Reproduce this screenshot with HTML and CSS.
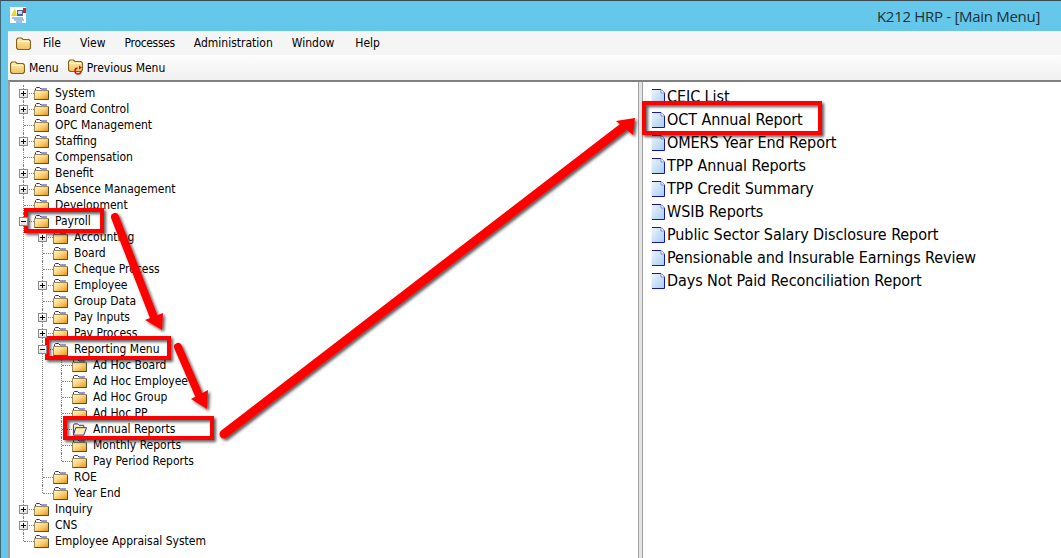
FILE: index.html
```html
<!DOCTYPE html>
<html lang="en">
<head>
    <meta charset="UTF-8">
    <title>K212 HRP - [Main Menu]</title>
    <link rel="stylesheet" href="styles.css">
</head>
<body>
  <svg class="defs" width="0" height="0">
      <defs>
          <linearGradient id="gold" x1="0" y1="0" x2="1" y2="1">
              <stop offset="0" stop-color="#fff4cc"/>
              <stop offset="0.45" stop-color="#fdd77e"/>
              <stop offset="1" stop-color="#e8900f"/>
          </linearGradient>
          <linearGradient id="menugold" x1="0" y1="0" x2="0" y2="1">
              <stop offset="0" stop-color="#fff0b8"/>
              <stop offset="1" stop-color="#f0c160"/>
          </linearGradient>
          <linearGradient id="paper" x1="0" y1="0" x2="1" y2="1">
              <stop offset="0" stop-color="#eef4fb"/>
              <stop offset="1" stop-color="#a6cdf2"/>
          </linearGradient>
          <symbol id="folder" viewBox="0 0 15 13">
              <path d="M1.5 3.5V1.5L2.5.5H5.5L7 2H13" fill="none" stroke="#2a2ab0"/>
              <path d="M.5 3.5H14.5V12.5H.5Z" fill="url(#gold)" stroke="#9a8a60"/>
              <path d="M.5 12.5H14.5V4" fill="none" stroke="#5f4f28"/>
          </symbol>
          <symbol id="folderopen" viewBox="0 0 16 13">
              <path d="M1.5 11V2L2.5.5H6L7.5 2H12.5V4" fill="#fff0b8" stroke="#2020b0"/>
              <path d="M1.5 12.5L4 4.5H15.5L12.5 12.5Z" fill="#ffeda6" stroke="#2020b0"/>
          </symbol>
          <symbol id="menufolder" viewBox="0 0 15 13">
              <path d="M.5 11V2.5L2 1H5.5L7 2.5H13L14.5 4V11L13 12.5H2Z" fill="url(#menugold)" stroke="#85621a" stroke-width="1.2"/>
              <path d="M1.5 4.5H13.5" stroke="#fff8dc" fill="none"/>
          </symbol>
          <symbol id="doc" viewBox="0 0 14 16">
              <path d="M.5 1H10L13 4.5V15.5H.5Z" fill="url(#paper)"/>
              <path d="M1 .5H10L13.5 4V15.5H1" fill="none" stroke="#1414b4"/>
              <path d="M10 .5V4H13.5" fill="#fff" stroke="#7a8ad0"/>
          </symbol>
      </defs>
  </svg>

  <div class="window">
      <header class="titlebar">
          <svg class="app-icon" width="16" height="16" viewBox="0 0 16 16">
              <rect width="16" height="16" fill="#fff"/>
              <path d="M1 9L5 1L7 9Z" fill="#e8d820"/>
              <rect x="7" y="3" width="6" height="6" fill="#4a6a9a"/>
              <rect x="8" y="4" width="4" height="3" fill="#c8d8e8"/>
              <rect x="13" y="1" width="3" height="5" fill="#e02020"/>
              <path d="M2 11H13M4 13H14M6 15H12" stroke="#3a80d0"/>
          </svg>
          <span class="title">K212 HRP - [Main Menu]</span>
      </header>

      <div class="client">
          <nav class="menubar">
              <svg class="menu-icon" width="15" height="13"><use href="#menufolder"/></svg>
              <span>File</span>
              <span>View</span>
              <span class="narrow">Processes</span>
              <span>Administration</span>
              <span>Window</span>
              <span class="help">Help</span>
          </nav>
          <div class="toolbar">
              <div class="tool">
                  <svg width="15" height="13"><use href="#menufolder"/></svg>
                  <span>Menu</span>
              </div>
              <div class="tool">
                  <svg width="15" height="17" viewBox="0 0 15 17">
                      <use href="#menufolder" width="15" height="13"/>
                      <path d="M9.5 9A3 3 0 1 0 13 12" fill="none" stroke="#e01010" stroke-width="1.5"/>
                      <path d="M11 6.5L14 8.5L11 10.5Z" fill="#e01010"/>
                  </svg>
                  <span>Previous Menu</span>
              </div>
          </div>

          <main class="panes">
              <section class="tree-pane">
                  <ul class="tree">
                      <li><div class="node"><i class="box"></i><svg width="15" height="13"><use href="#folder"/></svg><span>System</span></div></li>
                      <li><div class="node"><i class="box"></i><svg width="15" height="13"><use href="#folder"/></svg><span>Board Control</span></div></li>
                      <li><div class="node"><svg width="15" height="13"><use href="#folder"/></svg><span>OPC Management</span></div></li>
                      <li><div class="node"><i class="box"></i><svg width="15" height="13"><use href="#folder"/></svg><span>Staffing</span></div></li>
                      <li><div class="node"><svg width="15" height="13"><use href="#folder"/></svg><span>Compensation</span></div></li>
                      <li><div class="node"><i class="box"></i><svg width="15" height="13"><use href="#folder"/></svg><span>Benefit</span></div></li>
                      <li><div class="node"><i class="box"></i><svg width="15" height="13"><use href="#folder"/></svg><span>Absence Management</span></div></li>
                      <li><div class="node"><svg width="15" height="13"><use href="#folder"/></svg><span>Development</span></div></li>
                      <li>
                          <div class="node"><i class="box open"></i><svg width="15" height="13"><use href="#folder"/></svg><span>Payroll</span></div>
                          <ul>
                              <li><div class="node"><i class="box"></i><svg width="15" height="13"><use href="#folder"/></svg><span>Accounting</span></div></li>
                              <li><div class="node"><svg width="15" height="13"><use href="#folder"/></svg><span>Board</span></div></li>
                              <li><div class="node"><svg width="15" height="13"><use href="#folder"/></svg><span>Cheque Process</span></div></li>
                              <li><div class="node"><i class="box"></i><svg width="15" height="13"><use href="#folder"/></svg><span>Employee</span></div></li>
                              <li><div class="node"><svg width="15" height="13"><use href="#folder"/></svg><span>Group Data</span></div></li>
                              <li><div class="node"><i class="box"></i><svg width="15" height="13"><use href="#folder"/></svg><span>Pay Inputs</span></div></li>
                              <li><div class="node"><i class="box"></i><svg width="15" height="13"><use href="#folder"/></svg><span>Pay Process</span></div></li>
                              <li>
                                  <div class="node"><i class="box open"></i><svg width="15" height="13"><use href="#folder"/></svg><span>Reporting Menu</span></div>
                                  <ul>
                                      <li><div class="node"><svg width="15" height="13"><use href="#folder"/></svg><span>Ad Hoc Board</span></div></li>
                                      <li><div class="node"><svg width="15" height="13"><use href="#folder"/></svg><span>Ad Hoc Employee</span></div></li>
                                      <li><div class="node"><svg width="15" height="13"><use href="#folder"/></svg><span>Ad Hoc Group</span></div></li>
                                      <li><div class="node"><svg width="15" height="13"><use href="#folder"/></svg><span>Ad Hoc PP</span></div></li>
                                      <li><div class="node"><svg width="15" height="13"><use href="#folderopen"/></svg><span>Annual Reports</span></div></li>
                                      <li><div class="node"><svg width="15" height="13"><use href="#folder"/></svg><span>Monthly Reports</span></div></li>
                                      <li><div class="node"><svg width="15" height="13"><use href="#folder"/></svg><span>Pay Period Reports</span></div></li>
                                  </ul>
                              </li>
                              <li><div class="node"><svg width="15" height="13"><use href="#folder"/></svg><span>ROE</span></div></li>
                              <li><div class="node"><svg width="15" height="13"><use href="#folder"/></svg><span>Year End</span></div></li>
                          </ul>
                      </li>
                      <li><div class="node"><i class="box"></i><svg width="15" height="13"><use href="#folder"/></svg><span>Inquiry</span></div></li>
                      <li><div class="node"><i class="box"></i><svg width="15" height="13"><use href="#folder"/></svg><span>CNS</span></div></li>
                      <li><div class="node"><svg width="15" height="13"><use href="#folder"/></svg><span>Employee Appraisal System</span></div></li>
                  </ul>
              </section>
              <div class="splitter"></div>
              <section class="report-pane">
                  <ul class="reports">
                      <li><svg width="14" height="16"><use href="#doc"/></svg>CEIC List</li>
                      <li><svg width="14" height="16"><use href="#doc"/></svg>OCT Annual Report</li>
                      <li><svg width="14" height="16"><use href="#doc"/></svg>OMERS Year End Report</li>
                      <li><svg width="14" height="16"><use href="#doc"/></svg>TPP Annual Reports</li>
                      <li><svg width="14" height="16"><use href="#doc"/></svg>TPP Credit Summary</li>
                      <li><svg width="14" height="16"><use href="#doc"/></svg>WSIB Reports</li>
                      <li><svg width="14" height="16"><use href="#doc"/></svg>Public Sector Salary Disclosure Report</li>
                      <li><svg width="14" height="16"><use href="#doc"/></svg>Pensionable and Insurable Earnings Review</li>
                      <li><svg width="14" height="16"><use href="#doc"/></svg>Days Not Paid Reconciliation Report</li>
                  </ul>
              </section>
          </main>
      </div>
  </div>

  <!-- annotations drawn over the screenshot -->
  <svg class="annotations" width="1061" height="558" viewBox="0 0 1061 558">
      <defs>
          <filter id="shadow" x="-10%" y="-10%" width="120%" height="120%">
              <feDropShadow dx="2" dy="2" stdDeviation="1.5" flood-color="#000" flood-opacity="0.65"/>
          </filter>
      </defs>
      <g filter="url(#shadow)">
          <g fill="none" stroke="#ff0000" stroke-width="4">
              <rect x="26" y="210" width="76" height="21"/>
              <rect x="47" y="338" width="122" height="20"/>
              <rect x="65" y="418" width="147" height="20"/>
              <rect x="644" y="103" width="176" height="30"/>
          </g>
          <g fill="none" stroke="#ff0000" stroke-linecap="round">
              <path d="M115 217L155 320" stroke-width="8"/>
              <path d="M178 347L201 400" stroke-width="8"/>
              <path d="M224 434L626 125" stroke-width="9"/>
          </g>
          <g fill="#ff0000">
              <path d="M162 330L145 320L163 313Z"/>
              <path d="M207 409L191 399L208 390Z"/>
              <path d="M635 118L616 121L633 135Z"/>
          </g>
      </g>
  </svg>
</body>
</html>
```

FILE: styles.css
```css
/*General Style*/

*
{
    box-sizing: border-box;
    margin: 0;
    padding: 0;
}
body
{
    width: 1061px;
    height: 558px;
    overflow: hidden;
    position: relative;
    background-color: #65c8ea;
    font-family: "DejaVu Sans", sans-serif;
    font-stretch: condensed;
    font-size: 12px;
    color: #000;
}
ul
{
    list-style: none;
}
.defs
{
    position: absolute;
}
.annotations
{
    position: absolute;
    left: 0;
    top: 0;
}

/*Window*/

.window
{
    height: 558px;
    display: flex;
    flex-direction: column;
    border-top: 1px solid #3c4a50;
    border-left: 1px solid #3c6a7a;
}
.titlebar
{
    height: 30px;
    flex-shrink: 0;
    display: flex;
    justify-content: space-between;
    align-items: flex-start;
    padding: 6px 21px 0 9px;
}
.title
{
    font-family: "Open Sans", sans-serif;
    font-stretch: normal;
    font-size: 15px;
    letter-spacing: -0.3px;
    line-height: 18px;
    color: #1c3038;
}
.client
{
    flex: 1;
    min-height: 0;
    margin-left: 7px;
    display: flex;
    flex-direction: column;
}

/*Menu and toolbar*/

.menubar
{
    height: 24px;
    flex-shrink: 0;
    display: flex;
    align-items: center;
    gap: 19px;
    padding-left: 8px;
    background-color: #f5f5f5;
}
.menu-icon
{
    margin-right: -7px;
}
.narrow
{
    letter-spacing: -0.33px;
}
.help
{
    margin-left: 2px;
}
.toolbar
{
    height: 25px;
    flex-shrink: 0;
    display: flex;
    align-items: center;
    gap: 9px;
    padding-left: 2px;
    background: linear-gradient(#fdfdfd, #f0f0f0);
}
.tool
{
    display: flex;
    align-items: center;
    gap: 4px;
}
.tool svg
{
    overflow: visible;
}

/*Panes*/

.panes
{
    flex: 1;
    min-height: 0;
    display: flex;
    border-top: 2px solid #808080;
    border-left: 2px solid #a0a0a0;
    background-color: #fff;
}
.tree-pane
{
    width: 628px;
    padding: 3px 0 0 13px;
    overflow: hidden;
}
.splitter
{
    width: 5px;
    background-color: #e4e4e4;
    border-left: 1px solid #a0a0a0;
    border-right: 1px solid #a0a0a0;
}
.report-pane
{
    flex: 1;
    overflow: hidden;
}

/*Tree*/

.tree li
{
    position: relative;
    padding-left: 11px;
}
.tree li::before
{
    content: "";
    position: absolute;
    left: 0;
    top: 0;
    bottom: 0;
    border-left: 1px dotted #808080;
}
.tree li:last-child::before
{
    bottom: auto;
    height: 8px;
}
.tree ul
{
    margin-left: 8px;
}
.node
{
    height: 16px;
    display: flex;
    align-items: center;
    gap: 6px;
    white-space: nowrap;
}
.node::before
{
    content: "";
    position: absolute;
    left: 1px;
    top: 8px;
    width: 10px;
    border-top: 1px dotted #808080;
}
.box
{
    position: absolute;
    z-index: 1;
    left: -4px;
    top: 4px;
    width: 9px;
    height: 9px;
    border: 1px solid #8c8c8c;
    background: linear-gradient(#fff, #e0e0e0) no-repeat;
}
.box::before,
.box:not(.open)::after
{
    content: "";
    position: absolute;
    background-color: #000;
}
.box::before
{
    left: 1px;
    top: 3px;
    width: 5px;
    height: 1px;
}
.box:not(.open)::after
{
    left: 3px;
    top: 1px;
    width: 1px;
    height: 5px;
}

/*Report list*/

.reports
{
    padding: 3px 0 0 8px;
    font-size: 16px;
    letter-spacing: -0.08px;
}
.reports li
{
    height: 23px;
    display: flex;
    align-items: center;
    gap: 2px;
    white-space: nowrap;
}
```
